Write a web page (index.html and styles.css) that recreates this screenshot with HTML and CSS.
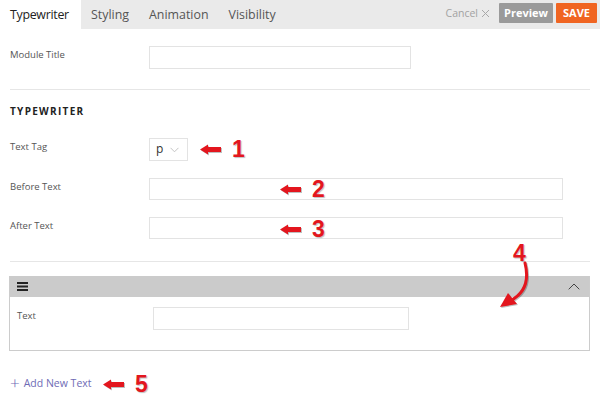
FILE: index.html
```html
<!DOCTYPE html>
<html>
<head>
<meta charset="utf-8">
<link rel="stylesheet" href="styles.css">
</head>
<body>
<div class="page">
  <div class="topbar">
    <div class="tabs">
      <span class="tab active">Typewriter</span>
      <span class="tab">Styling</span>
      <span class="tab">Animation</span>
      <span class="tab">Visibility</span>
    </div>
    <div class="actions">
      <span class="cancel">Cancel <svg class="x" width="9" height="9" viewBox="0 0 9 9"><path d="M1 1L8 8M8 1L1 8" stroke="#a8a8a8" stroke-width="1"/></svg></span>
      <span class="btn preview">Preview</span>
      <span class="btn save">SAVE</span>
    </div>
  </div>

  <div class="content">
    <div class="row first">
      <label class="lbl">Module Title</label>
      <div class="input w-short"></div>
    </div>
    <hr class="divider">
    <h3 class="heading">TYPEWRITER</h3>
    <div class="row tag">
      <label class="lbl">Text Tag</label>
      <div class="select"><span>p</span><svg width="9" height="6" viewBox="0 0 9 6"><path d="M0.5 0.8L4.5 4.8L8.5 0.8" fill="none" stroke="#c4c4c4" stroke-width="1"/></svg></div>
    </div>
    <div class="row before">
      <label class="lbl">Before Text</label>
      <div class="input w-long"></div>
    </div>
    <div class="row after">
      <label class="lbl">After Text</label>
      <div class="input w-long"></div>
    </div>
    <hr class="divider second">

    <div class="panel">
      <div class="panel-head">
        <svg width="11" height="9" viewBox="0 0 11 9"><rect x="0" y="0" width="11" height="2" fill="#222"/><rect x="0" y="3.5" width="11" height="2" fill="#222"/><rect x="0" y="7" width="11" height="2" fill="#222"/></svg>
        <svg width="12" height="7" viewBox="0 0 12 7"><path d="M0.7 6.3L6 1L11.3 6.3" fill="none" stroke="#444" stroke-width="1"/></svg>
      </div>
      <div class="panel-body">
        <label class="lbl">Text</label>
        <div class="input w-panel"></div>
      </div>
    </div>

    <div class="add"><span class="plus">+</span> Add New Text</div>
  </div>

  <div class="note n1"><svg class="arr" width="21" height="11" viewBox="0 0 21 11"><polygon points="0,5.5 8,0.5 8,3 21,3 21,8 8,8 8,10.5" fill="#e3161e"/></svg><span class="num">1</span></div>
  <div class="note n2"><svg class="arr" width="21" height="11" viewBox="0 0 21 11"><polygon points="0,5.5 8,0.5 8,3 21,3 21,8 8,8 8,10.5" fill="#e3161e"/></svg><span class="num">2</span></div>
  <div class="note n3"><svg class="arr" width="21" height="11" viewBox="0 0 21 11"><polygon points="0,5.5 8,0.5 8,3 21,3 21,8 8,8 8,10.5" fill="#e3161e"/></svg><span class="num">3</span></div>
  <div class="note n5"><svg class="arr" width="21" height="11" viewBox="0 0 21 11"><polygon points="0,5.5 8,0.5 8,3 21,3 21,8 8,8 8,10.5" fill="#e3161e"/></svg><span class="num">5</span></div>
  <div class="note n4">
    <span class="num">4</span>
    <svg class="curve" width="40" height="50" viewBox="0 0 40 50"><path d="M27 2 C31 18 28 32 12 40" fill="none" stroke="#e3161e" stroke-width="3" stroke-linecap="round"/><polygon points="2,46 10,32 19,43" fill="#e3161e"/></svg>
  </div>
</div>
</body>
</html>
```

FILE: styles.css
```css
* { box-sizing: border-box; }
html, body { margin: 0; padding: 0; background: #fff; }
body { font-family: "Open Sans", "Liberation Sans", sans-serif; color: #555; }
.page { position: relative; width: 600px; height: 415px; overflow: hidden; }

.topbar { height: 29px; background: #eaeaea; display: flex; justify-content: space-between; align-items: stretch; }
.tabs { display: flex; }
.tab { padding: 0 10px; font-size: 12.4px; line-height: 29px; color: #555; }
.tab.active { background: #fff; color: #222; width: 81px; padding: 0 0 0 10px; letter-spacing: -0.3px; }
.actions { display: flex; align-items: flex-start; padding-top: 3px; padding-right: 3px; }
.cancel { font-size: 10.5px; color: #a2a2a2; line-height: 20px; margin-right: 9px; display: flex; align-items: center; }
.cancel .x { margin-left: 3px; }
.btn { height: 20px; line-height: 20px; font-size: 11px; font-weight: 700; color: #fff; border-radius: 1px; }
.preview { background: #9a9a9a; width: 54px; text-align: center; margin-right: 3px; }
.save { background: #f06522; width: 41px; text-align: center; }

.content { padding: 0 10px; }
.row { display: flex; align-items: flex-start; height: 22px; }
.row.first { margin-top: 17px; height: 23px; }
.row.tag { margin-top: 21px; height: 23px; }
.row.before { margin-top: 17px; }
.row.after { margin-top: 17px; }
.lbl { width: 139px; font-size: 9.5px; line-height: 13px; padding-top: 2px; color: #555; flex: none; }
.input { height: 22px; border: 1px solid #e3e3e3; background: #fff; }
.row.first .input { height: 23px; }
.w-short { width: 262px; }
.w-long { width: 414px; }
.select { width: 39px; height: 23px; border: 1px solid #e3e3e3; display: flex; align-items: center; justify-content: space-between; padding: 0 8px 0 6px; font-size: 12px; color: #333; }
.select span { margin-top: -2px; }

.divider { border: 0; border-top: 1px solid #e6e6e6; margin: 20px 0 0; }
.divider.second { margin-top: 22px; }
.heading { margin: 15px 0 0; font-size: 10px; font-weight: 700; letter-spacing: 1.3px; color: #222; line-height: 12px; }

.panel { margin: 14px 0 0 -1px; width: 581px; border: 1px solid #ccc; border-top: 0; }
.panel-head { height: 21px; background: #cbcbcb; display: flex; justify-content: space-between; align-items: center; padding: 0 9px 0 7px; }
.panel-body { display: flex; align-items: flex-start; height: 53px; padding: 10px 0 0 7px; }
.panel-body .lbl { width: 136px; }
.w-panel { width: 256px; height: 23px; }

.add { margin-top: 25px; font-size: 10.5px; color: #6e6bb5; display: flex; align-items: center; }
.plus { font-size: 17px; font-weight: 300; margin-right: 4px; line-height: 14px; }

.note { position: absolute; display: flex; align-items: center; }
.arr { filter: drop-shadow(1px 1px 0.6px rgba(0,0,0,0.25)); }
.num { font-family: "Liberation Sans", Arial, sans-serif; font-weight: 700; font-size: 23px; color: #e3161e; margin-left: 11px; text-shadow: 1px 1px 1px rgba(0,0,0,0.25); line-height: 20px; }
.n1 { left: 200px; top: 139px; }
.n2 { left: 280px; top: 179px; }
.n3 { left: 280px; top: 219px; }
.n5 { left: 103px; top: 374px; }
.n4 { left: 496px; top: 240px; width: 40px; height: 70px; display: block; }
.n4 .num { position: absolute; left: 17px; top: 3px; margin: 0; }
.n4 .curve { position: absolute; left: 2px; top: 21px; filter: drop-shadow(1px 1px 0.6px rgba(0,0,0,0.25)); }
```
